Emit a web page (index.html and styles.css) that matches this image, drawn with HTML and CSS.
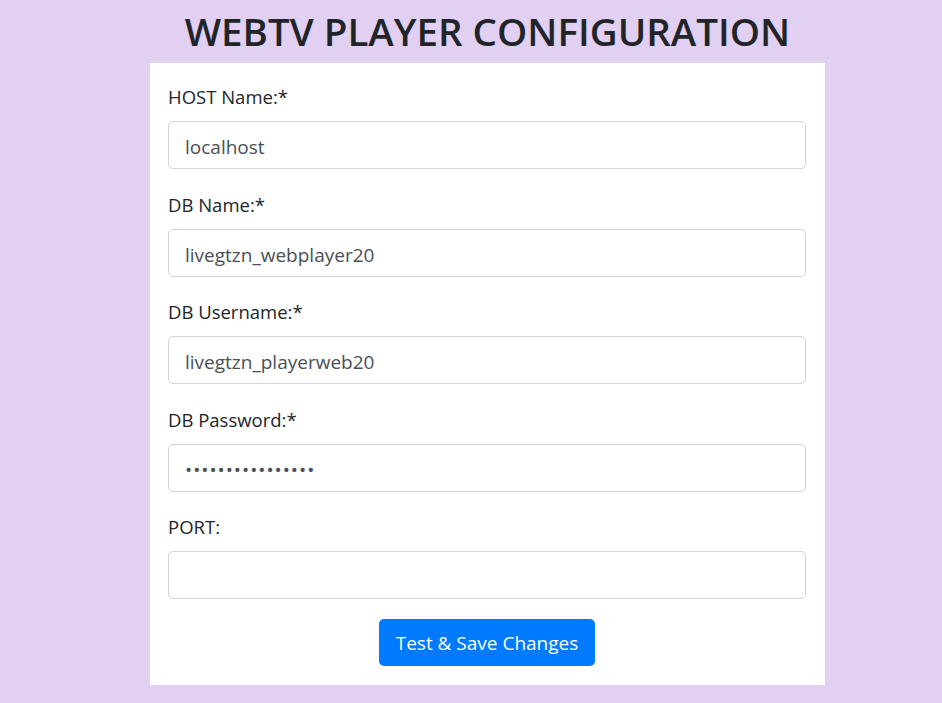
FILE: index.html
```html
<!DOCTYPE html>
<html lang="en">
<head>
    <meta charset="UTF-8">
    <meta name="viewport" content="width=device-width, initial-scale=1.0">
    <title>WebTV Player Configuration</title>
    <link rel="stylesheet" href="styles.css">
</head>
<body>
    <div class="wrapper">
        <h1>WEBTV PLAYER CONFIGURATION</h1>

        <form class="config-card" id="configForm">
            <div class="form-group">
                <label for="hostName">HOST Name:*</label>
                <input type="text" id="hostName" name="hostName" value="localhost" required>
            </div>

            <div class="form-group">
                <label for="dbName">DB Name:*</label>
                <input type="text" id="dbName" name="dbName" value="livegtzn_webplayer20" required>
            </div>

            <div class="form-group">
                <label for="dbUser">DB Username:*</label>
                <input type="text" id="dbUser" name="dbUser" value="livegtzn_playerweb20" required>
            </div>

            <div class="form-group">
                <label for="dbPass">DB Password:*</label>
                <input type="password" id="dbPass" name="dbPass" value="abcdefghijklmnop" required>
            </div>

            <div class="form-group last">
                <label for="port">PORT:</label>
                <input type="text" id="port" name="port">
            </div>

            <div class="actions">
                <button type="submit">Test &amp; Save Changes</button>
            </div>
        </form>
    </div>
</body>
</html>
```

FILE: styles.css
```css
body {
    margin: 0;
    background-color: #e1d0f2;
    font-family: "Open Sans", Arial, sans-serif;
    color: #212529;
}

.wrapper {
    width: 675px;
    margin-left: 150px;
}

h1 {
    margin: 0;
    padding: 7px 0 8px;
    text-align: center;
    font-size: 38.5px;
    font-weight: 600;
    line-height: 48px;
    color: #212529;
}

.config-card {
    background: white;
    padding: 20px 19px 19px 18px;
}

.form-group {
    margin-bottom: 21.5px;
}

.form-group.last {
    margin-bottom: 20px;
}

label {
    display: block;
    margin-bottom: 10px;
    font-size: 18.5px;
    line-height: 28px;
}

input {
    display: block;
    width: 100%;
    height: 48px;
    padding: 10px 16px 6px;
    border: 1px solid #ced4da;
    border-radius: 5px;
    font-family: inherit;
    font-size: 19px;
    color: #495057;
    box-sizing: border-box;
}

input[type="password"] {
    letter-spacing: 1px;
}

input:focus {
    outline: none;
    border-color: #80bdff;
}

.actions {
    text-align: center;
}

button {
    background-color: #007bff;
    color: white;
    height: 47px;
    padding: 0 17px;
    border: none;
    border-radius: 5px;
    font-family: inherit;
    font-size: 19px;
    cursor: pointer;
}

button:hover {
    background-color: #0069d9;
}
```
